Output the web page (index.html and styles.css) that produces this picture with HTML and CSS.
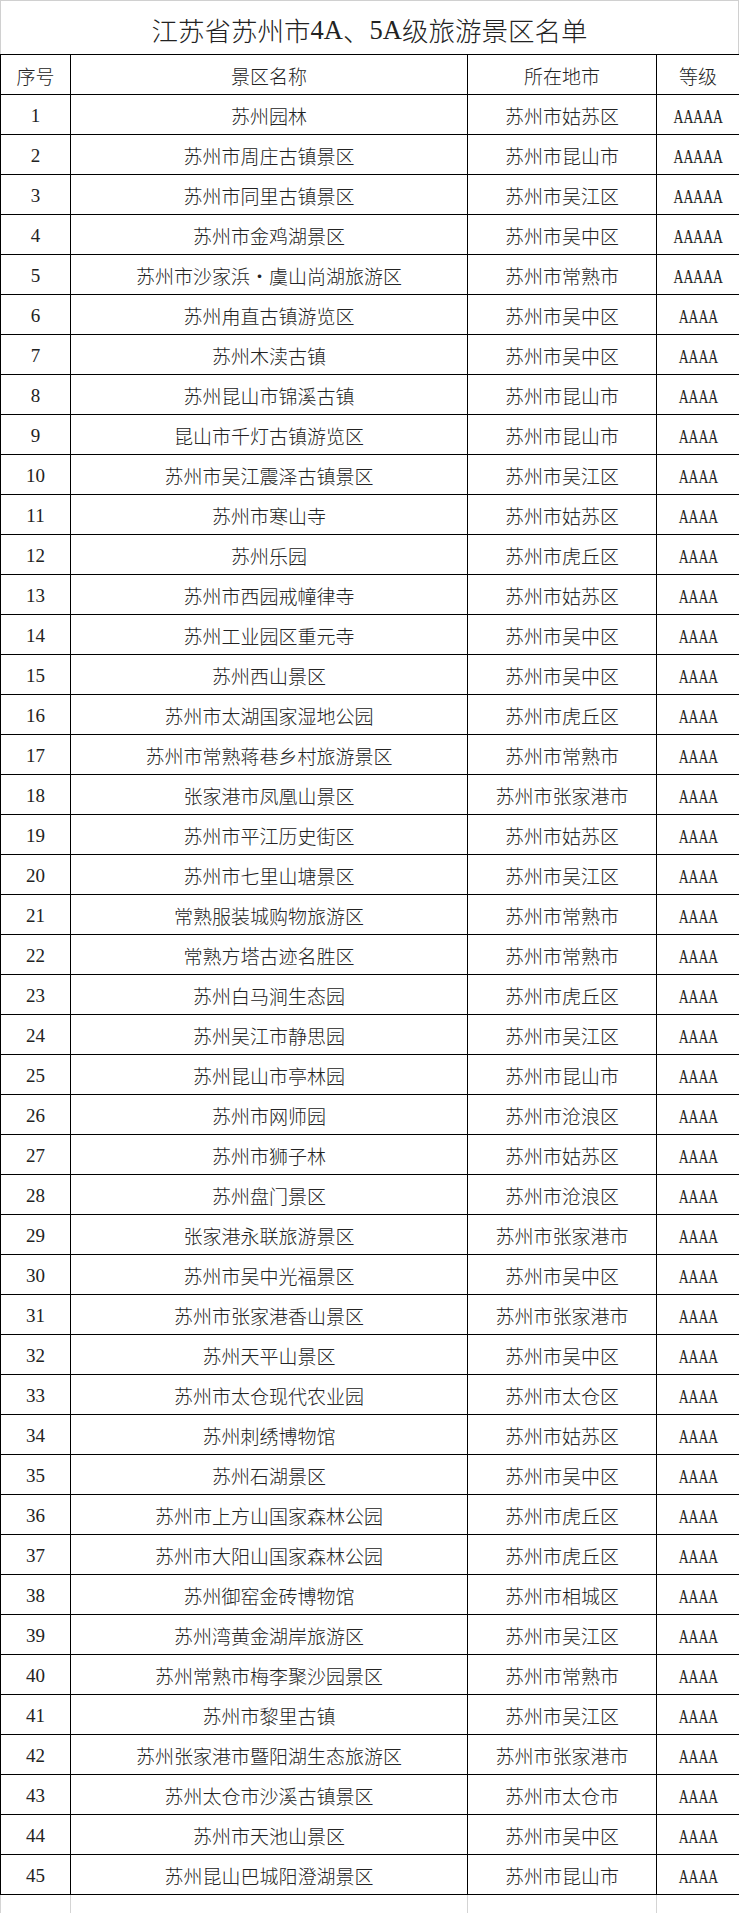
FILE: index.html
```html
<!DOCTYPE html>
<html lang="zh-CN">
<head>
<meta charset="utf-8">
<title>江苏省苏州市4A、5A级旅游景区名单</title>
<link rel="stylesheet" href="styles.css">
</head>
<body>
<div class="sheet">
  <div class="title">江苏省苏州市<span class="latin">4A</span>、<span class="latin">5A</span>级旅游景区名单</div>
  <table class="list">
    <colgroup>
      <col class="c-no">
      <col class="c-name">
      <col class="c-city">
      <col class="c-grade">
    </colgroup>
    <thead>
      <tr><th>序号</th><th>景区名称</th><th>所在地市</th><th>等级</th></tr>
    </thead>
    <tbody>
      <tr><td class="num">1</td><td>苏州园林</td><td>苏州市姑苏区</td><td><span class="grade">AAAAA</span></td></tr>
      <tr><td class="num">2</td><td>苏州市周庄古镇景区</td><td>苏州市昆山市</td><td><span class="grade">AAAAA</span></td></tr>
      <tr><td class="num">3</td><td>苏州市同里古镇景区</td><td>苏州市吴江区</td><td><span class="grade">AAAAA</span></td></tr>
      <tr><td class="num">4</td><td>苏州市金鸡湖景区</td><td>苏州市吴中区</td><td><span class="grade">AAAAA</span></td></tr>
      <tr><td class="num">5</td><td>苏州市沙家浜・虞山尚湖旅游区</td><td>苏州市常熟市</td><td><span class="grade">AAAAA</span></td></tr>
      <tr><td class="num">6</td><td>苏州甪直古镇游览区</td><td>苏州市吴中区</td><td><span class="grade">AAAA</span></td></tr>
      <tr><td class="num">7</td><td>苏州木渎古镇</td><td>苏州市吴中区</td><td><span class="grade">AAAA</span></td></tr>
      <tr><td class="num">8</td><td>苏州昆山市锦溪古镇</td><td>苏州市昆山市</td><td><span class="grade">AAAA</span></td></tr>
      <tr><td class="num">9</td><td>昆山市千灯古镇游览区</td><td>苏州市昆山市</td><td><span class="grade">AAAA</span></td></tr>
      <tr><td class="num">10</td><td>苏州市吴江震泽古镇景区</td><td>苏州市吴江区</td><td><span class="grade">AAAA</span></td></tr>
      <tr><td class="num">11</td><td>苏州市寒山寺</td><td>苏州市姑苏区</td><td><span class="grade">AAAA</span></td></tr>
      <tr><td class="num">12</td><td>苏州乐园</td><td>苏州市虎丘区</td><td><span class="grade">AAAA</span></td></tr>
      <tr><td class="num">13</td><td>苏州市西园戒幢律寺</td><td>苏州市姑苏区</td><td><span class="grade">AAAA</span></td></tr>
      <tr><td class="num">14</td><td>苏州工业园区重元寺</td><td>苏州市吴中区</td><td><span class="grade">AAAA</span></td></tr>
      <tr><td class="num">15</td><td>苏州西山景区</td><td>苏州市吴中区</td><td><span class="grade">AAAA</span></td></tr>
      <tr><td class="num">16</td><td>苏州市太湖国家湿地公园</td><td>苏州市虎丘区</td><td><span class="grade">AAAA</span></td></tr>
      <tr><td class="num">17</td><td>苏州市常熟蒋巷乡村旅游景区</td><td>苏州市常熟市</td><td><span class="grade">AAAA</span></td></tr>
      <tr><td class="num">18</td><td>张家港市凤凰山景区</td><td>苏州市张家港市</td><td><span class="grade">AAAA</span></td></tr>
      <tr><td class="num">19</td><td>苏州市平江历史街区</td><td>苏州市姑苏区</td><td><span class="grade">AAAA</span></td></tr>
      <tr><td class="num">20</td><td>苏州市七里山塘景区</td><td>苏州市吴江区</td><td><span class="grade">AAAA</span></td></tr>
      <tr><td class="num">21</td><td>常熟服装城购物旅游区</td><td>苏州市常熟市</td><td><span class="grade">AAAA</span></td></tr>
      <tr><td class="num">22</td><td>常熟方塔古迹名胜区</td><td>苏州市常熟市</td><td><span class="grade">AAAA</span></td></tr>
      <tr><td class="num">23</td><td>苏州白马涧生态园</td><td>苏州市虎丘区</td><td><span class="grade">AAAA</span></td></tr>
      <tr><td class="num">24</td><td>苏州吴江市静思园</td><td>苏州市吴江区</td><td><span class="grade">AAAA</span></td></tr>
      <tr><td class="num">25</td><td>苏州昆山市亭林园</td><td>苏州市昆山市</td><td><span class="grade">AAAA</span></td></tr>
      <tr><td class="num">26</td><td>苏州市网师园</td><td>苏州市沧浪区</td><td><span class="grade">AAAA</span></td></tr>
      <tr><td class="num">27</td><td>苏州市狮子林</td><td>苏州市姑苏区</td><td><span class="grade">AAAA</span></td></tr>
      <tr><td class="num">28</td><td>苏州盘门景区</td><td>苏州市沧浪区</td><td><span class="grade">AAAA</span></td></tr>
      <tr><td class="num">29</td><td>张家港永联旅游景区</td><td>苏州市张家港市</td><td><span class="grade">AAAA</span></td></tr>
      <tr><td class="num">30</td><td>苏州市吴中光福景区</td><td>苏州市吴中区</td><td><span class="grade">AAAA</span></td></tr>
      <tr><td class="num">31</td><td>苏州市张家港香山景区</td><td>苏州市张家港市</td><td><span class="grade">AAAA</span></td></tr>
      <tr><td class="num">32</td><td>苏州天平山景区</td><td>苏州市吴中区</td><td><span class="grade">AAAA</span></td></tr>
      <tr><td class="num">33</td><td>苏州市太仓现代农业园</td><td>苏州市太仓区</td><td><span class="grade">AAAA</span></td></tr>
      <tr><td class="num">34</td><td>苏州刺绣博物馆</td><td>苏州市姑苏区</td><td><span class="grade">AAAA</span></td></tr>
      <tr><td class="num">35</td><td>苏州石湖景区</td><td>苏州市吴中区</td><td><span class="grade">AAAA</span></td></tr>
      <tr><td class="num">36</td><td>苏州市上方山国家森林公园</td><td>苏州市虎丘区</td><td><span class="grade">AAAA</span></td></tr>
      <tr><td class="num">37</td><td>苏州市大阳山国家森林公园</td><td>苏州市虎丘区</td><td><span class="grade">AAAA</span></td></tr>
      <tr><td class="num">38</td><td>苏州御窑金砖博物馆</td><td>苏州市相城区</td><td><span class="grade">AAAA</span></td></tr>
      <tr><td class="num">39</td><td>苏州湾黄金湖岸旅游区</td><td>苏州市吴江区</td><td><span class="grade">AAAA</span></td></tr>
      <tr><td class="num">40</td><td>苏州常熟市梅李聚沙园景区</td><td>苏州市常熟市</td><td><span class="grade">AAAA</span></td></tr>
      <tr><td class="num">41</td><td>苏州市黎里古镇</td><td>苏州市吴江区</td><td><span class="grade">AAAA</span></td></tr>
      <tr><td class="num">42</td><td>苏州张家港市暨阳湖生态旅游区</td><td>苏州市张家港市</td><td><span class="grade">AAAA</span></td></tr>
      <tr><td class="num">43</td><td>苏州太仓市沙溪古镇景区</td><td>苏州市太仓市</td><td><span class="grade">AAAA</span></td></tr>
      <tr><td class="num">44</td><td>苏州市天池山景区</td><td>苏州市吴中区</td><td><span class="grade">AAAA</span></td></tr>
      <tr><td class="num">45</td><td>苏州昆山巴城阳澄湖景区</td><td>苏州市昆山市</td><td><span class="grade">AAAA</span></td></tr>
      <tr class="blank"><td></td><td></td><td></td><td></td></tr>
    </tbody>
  </table>
</div>
</body>
</html>
```

FILE: styles.css
```css
html, body {
  margin: 0;
  padding: 0;
  background: #fff;
}

.sheet {
  width: 739px;
  height: 1913px;
  overflow: hidden;
  font-family: "Noto Sans CJK SC", "Liberation Serif", sans-serif;
  font-weight: 300;
  color: #222;
}

.latin,
.num,
.grade {
  font-family: "Liberation Serif", "Noto Sans CJK SC", serif;
  font-weight: 400;
}

.title {
  height: 54px;
  box-sizing: border-box;
  border: 1px solid #d0d0d0;
  border-bottom: none;
  display: flex;
  align-items: center;
  justify-content: center;
  padding-top: 5px;
  font-size: 26.5px;
  line-height: 1;
}

.list {
  width: 739px;
  border-collapse: collapse;
  table-layout: fixed;
}

.c-no { width: 70px; }
.c-name { width: 397px; }
.c-city { width: 189px; }
.c-grade { width: 83px; }

.list tr {
  height: 40px;
}

.list th,
.list td {
  border: 1px solid #000;
  padding: 2px 0 0;
  text-align: center;
  vertical-align: middle;
  font-size: 19px;
  font-weight: 300;
  line-height: 1;
  white-space: nowrap;
}

.list td.num {
  font-weight: 400;
}

.grade {
  display: inline-block;
  transform: scaleX(0.72);
}

.list .blank td {
  border-color: #d4d4d4;
}
```
